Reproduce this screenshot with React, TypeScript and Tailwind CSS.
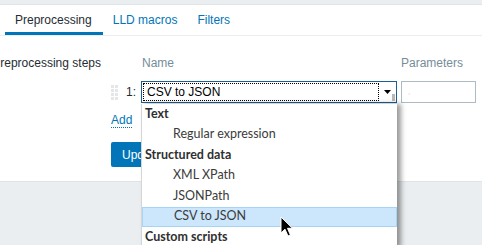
import React from 'react'

const tabs = ['Preprocessing', 'LLD macros', 'Filters']

const options: { label: string; group?: boolean; active?: boolean }[] = [
  { label: 'Text', group: true },
  { label: 'Regular expression' },
  { label: 'Structured data', group: true },
  { label: 'XML XPath' },
  { label: 'JSONPath' },
  { label: 'CSV to JSON', active: true },
  { label: 'Custom scripts', group: true },
]

function DragHandle() {
  return (
    <svg width="7" height="17" viewBox="0 0 7 17" className="shrink-0">
      {[0, 4, 8, 12].map((y) =>
        [0, 4].map((x) => (
          <rect key={`${x}-${y}`} x={x} y={y + 1} width="3" height="3" fill="#e3e7ea" />
        ))
      )}
    </svg>
  )
}

function Cursor() {
  return (
    <svg width="14" height="22" viewBox="0 0 14 22" className="absolute left-[280px] top-[216px]">
      <path
        d="M1 1 L1 17 L5 13.2 L8 20 L10.4 19 L7.5 12.3 L12.5 12.3 Z"
        fill="#000"
        stroke="#fff"
        strokeWidth="1"
        strokeLinejoin="round"
      />
    </svg>
  )
}

export default function App() {
  return (
    <div className="relative w-[482px] h-[245px] overflow-hidden bg-[#ebeef0] font-['Liberation_Sans',Arial,sans-serif] text-[12px] text-[#1f2c33]">
      <div className="h-[5px] border-b border-[#dfe4e7]" />
      <div className="h-[177px] bg-white border-b border-[#dfe4e7]">
        <ul className="flex h-[31px] border-b border-[#ebeef0] pl-[5px]">
          {tabs.map((t, i) => (
            <li
              key={t}
              className={
                i === 0
                  ? 'flex items-center h-full pl-[10px] pr-[11px] pt-[3px] border-b-[3px] border-[#0275b8] text-[#1f2c33]'
                  : 'flex items-center h-full px-[10px] text-[#0275b8]'
              }
            >
              {t}
            </li>
          ))}
        </ul>

        <div className="flex mt-[20px]">
          <div className="w-[101px] flex justify-end leading-[14px] whitespace-nowrap">
            <span>Preprocessing steps</span>
          </div>
          <div className="ml-[10px] flex flex-col">
            <div className="flex h-[14px] leading-[14px] text-[#768d99]">
              <span className="ml-[31px] w-[259px]">Name</span>
              <span>Parameters</span>
            </div>

            <div className="flex items-center h-[22px] mt-[11px]">
              <DragHandle />
              <span className="ml-[8px] w-[15px] text-[#1f2c33]">1:</span>
              <div className="w-[256px] h-[22px] border border-[#1d5e93] flex items-center p-[1px] bg-white">
                <div className="flex-1 h-full border border-dotted border-black flex items-center pl-[3px] text-[12px] text-black">
                  CSV to JSON
                </div>
                <div className="w-[16px] h-full flex items-center justify-center relative">
                  <svg width="7" height="4" viewBox="0 0 7 4">
                    <path d="M0 0 H7 L3.5 4 Z" fill="#000" />
                  </svg>
                  <div className="absolute right-0 bottom-0 w-[3px] h-[7px] bg-[#b9b9b9]" />
                </div>
              </div>
              <div className="ml-[4px] w-[75px] h-[22px] border border-[#acbbc2] flex items-center pl-[6px]">
                <span className="text-[#e6c8c8] text-[8px] leading-none">,</span>
              </div>
            </div>

            <a className="mt-[10px] self-start leading-[14px] text-[#0275b8] border-b border-dotted border-[#0275b8]">
              Add
            </a>

            <button className="mt-[14px] self-start h-[25px] px-[11px] bg-[#0275b8] text-white rounded-[2px]">
              Update
            </button>
          </div>
        </div>
      </div>

      <div className="absolute left-[141px] top-[104px] w-[256px] bg-white border-l border-[#d6d6d6] shadow-[4px_0_5px_rgba(0,0,0,0.4)] font-['Lato','Noto_Sans',sans-serif] text-[12.5px] text-[#3b3b3b]">
        {options.map((o) => (
          <div
            key={o.label}
            className={
              o.group
                ? 'h-[20.5px] flex items-center pl-[3px] font-bold text-[#2f2f2f]'
                : o.active
                  ? 'h-[20.5px] flex items-center pl-[31px] bg-[#cce6fc] border border-[#a6d4f7]'
                  : 'h-[20.5px] flex items-center pl-[31px]'
            }
          >
            {o.label}
          </div>
        ))}
      </div>

      <Cursor />
    </div>
  )
}
